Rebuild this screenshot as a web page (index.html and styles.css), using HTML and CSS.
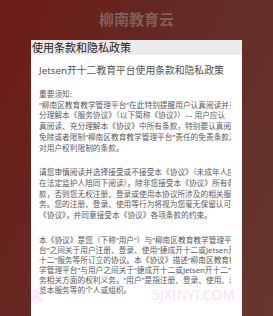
FILE: index.html
```html
<!DOCTYPE html>
<html lang="zh-CN">
<head>
  <meta charset="UTF-8">
  <meta name="viewport" content="width=device-width, initial-scale=1.0">
  <title>柳南教育云</title>
  <link rel="stylesheet" href="styles.css">
</head>
<body>
  <h1 class="app-title">柳南教育云</h1>

  <div class="dialog">
    <div class="dialog-header">使用条款和隐私政策</div>
    <div class="dialog-body">
      <h2 class="doc-title">Jetsen开十二教育平台使用条款和隐私政策</h2>

      <div class="doc-text">
        <p>
          <span>重要须知:</span>
          <span>“柳南区教育教学管理平台”在此特别提醒用户认真阅读并充</span>
          <span>分理解本《服务协议》（以下简称《协议》）--- 用户应认</span>
          <span>真阅读、充分理解本《协议》中所有条款，特别要认真阅读</span>
          <span>免除或者限制“柳南区教育教学管理平台”责任的免责条款及</span>
          <span>对用户权利限制的条款。</span>
        </p>
        <p>
          <span>请您审慎阅读并选择接受或不接受本《协议》（未成年人应</span>
          <span>在法定监护人陪同下阅读）。除非您接受本《协议》所有条</span>
          <span>款，否则您无权注册、登录或使用本协议所涉及的相关服</span>
          <span>务。您的注册、登录、使用等行为将视为您毫无保留认可本</span>
          <span>《协议》，并同意接受本《协议》各项条款的约束。</span>
        </p>
        <p class="last">
          <span>本《协议》是您（下称“用户”）与“柳南区教育教学管理平</span>
          <span>台”之间关于用户注册、登录、使用“捷成开十二或Jetsen开</span>
          <span>十二”服务等所订立的协议。本《协议》描述“柳南区教育教</span>
          <span>学管理平台”与用户之间关于“捷成开十二或Jetsen开十二”服</span>
          <span>务相关方面的权利义务。“用户”是指注册、登录、使用、浏</span>
          <span>览本服务等的个人或组织。</span>
        </p>
      </div>
    </div>
  </div>

  <div class="watermark">
    <span>素</span>
    <span>.5JXINYI.COM</span>
  </div>
</body>
</html>
```

FILE: styles.css
```css
body, h1, h2, p {
  margin: 0;
  padding: 0;
}

body {
  width: 273px;
  height: 316px;
  overflow: hidden;
  position: relative;
  font-family: "Noto Sans", "Noto Sans CJK SC", sans-serif;
  background: linear-gradient(115deg, #6d1b16 0%, #642a24 45%, #66372e 100%);
}

.app-title {
  height: 40px;
  line-height: 38px;
  text-align: center;
  font-size: 15px;
  font-weight: bold;
  color: #7f5f5a;
}

.dialog {
  margin-left: 31px;
  width: 211px;
  height: 276px;
  background-color: #fff;
  overflow: hidden;
}

.dialog-header {
  height: 15px;
  line-height: 15px;
  padding-left: 1px;
  font-size: 11px;
  color: #222;
  background-color: #ebebeb;
}

.dialog-body {
  padding: 10px 11px 0 8px;
  overflow: hidden;
}

.doc-title {
  font-size: 9.8px;
  font-weight: normal;
  line-height: 12px;
  color: #555;
  margin-bottom: 12px;
  white-space: nowrap;
}

.doc-text {
  overflow: hidden;
  font-size: 7.7px;
  line-height: 10.7px;
  color: #5a5a5a;
}

.doc-text p {
  margin-bottom: 14px;
}

.doc-text p.last {
  margin-top: 6px;
  line-height: 10px;
}

.doc-text span {
  display: block;
  white-space: nowrap;
}

.watermark {
  position: absolute;
  left: 30px;
  top: 285px;
  width: 205px;
  display: flex;
  justify-content: space-between;
  font-size: 14px;
  color: rgba(235, 180, 235, 0.4);
  pointer-events: none;
}
```
